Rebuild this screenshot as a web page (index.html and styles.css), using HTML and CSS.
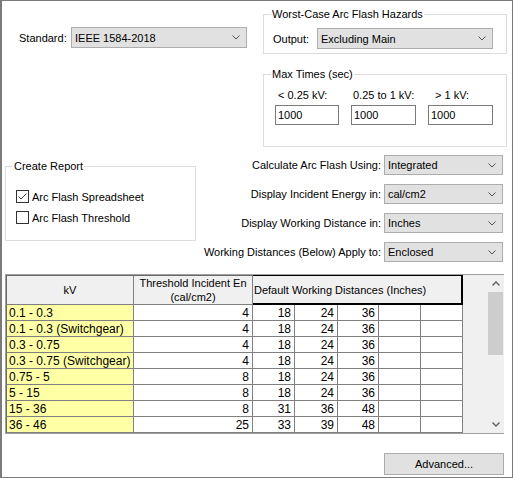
FILE: index.html
```html
<!DOCTYPE html>
<html lang="en">
<head>
    <meta charset="UTF-8">
    <title>Arc Flash Options</title>
    <link rel="stylesheet" href="styles.css">
</head>
<body>
<div class="window">

    <div class="top">
        <div class="standard">
            <label class="lbl std-lbl">Standard:</label>
            <div class="combo combo-wide">
                <span>IEEE 1584-2018</span>
                <svg class="chev" width="8" height="5" viewBox="0 0 8 5"><path d="M0.5 0.5 L4 4 L7.5 0.5" fill="none" stroke="#555"/></svg>
            </div>
        </div>

        <div class="right-col">
            <fieldset class="group g-worst">
                <legend>Worst-Case Arc Flash Hazards</legend>
                <div class="out-row">
                    <label class="lbl out-lbl">Output:</label>
                    <div class="combo combo-wide">
                        <span>Excluding Main</span>
                        <svg class="chev" width="8" height="5" viewBox="0 0 8 5"><path d="M0.5 0.5 L4 4 L7.5 0.5" fill="none" stroke="#555"/></svg>
                    </div>
                </div>
            </fieldset>

            <fieldset class="group g-times">
                <legend>Max Times (sec)</legend>
                <div class="times">
                    <div class="time">
                        <label class="t1">&lt; 0.25 kV:</label>
                        <input type="text" value="1000">
                    </div>
                    <div class="time">
                        <label class="t2">0.25 to 1 kV:</label>
                        <input type="text" value="1000">
                    </div>
                    <div class="time">
                        <label class="t3">&gt; 1 kV:</label>
                        <input type="text" value="1000">
                    </div>
                </div>
            </fieldset>
        </div>
    </div>

    <div class="middle">
        <fieldset class="group g-report">
            <legend>Create Report</legend>
            <div class="check-row first">
                <svg class="cb" width="13" height="13" viewBox="0 0 13 13"><rect x="0.5" y="0.5" width="12" height="12" fill="#fff" stroke="#333"/><path d="M2.5 6.5 L5 9 L10.5 3.5" fill="none" stroke="#444"/></svg>
                <span>Arc Flash Spreadsheet</span>
            </div>
            <div class="check-row">
                <svg class="cb" width="13" height="13" viewBox="0 0 13 13"><rect x="0.5" y="0.5" width="12" height="12" fill="#fff" stroke="#333"/></svg>
                <span>Arc Flash Threshold</span>
            </div>
        </fieldset>

        <div class="options">
            <div class="opt-row">
                <label class="lbl">Calculate Arc Flash Using:</label>
                <div class="combo combo-narrow">
                    <span>Integrated</span>
                    <svg class="chev" width="8" height="5" viewBox="0 0 8 5"><path d="M0.5 0.5 L4 4 L7.5 0.5" fill="none" stroke="#555"/></svg>
                </div>
            </div>
            <div class="opt-row">
                <label class="lbl">Display Incident Energy in:</label>
                <div class="combo combo-narrow">
                    <span>cal/cm2</span>
                    <svg class="chev" width="8" height="5" viewBox="0 0 8 5"><path d="M0.5 0.5 L4 4 L7.5 0.5" fill="none" stroke="#555"/></svg>
                </div>
            </div>
            <div class="opt-row">
                <label class="lbl">Display Working Distance in:</label>
                <div class="combo combo-narrow">
                    <span>Inches</span>
                    <svg class="chev" width="8" height="5" viewBox="0 0 8 5"><path d="M0.5 0.5 L4 4 L7.5 0.5" fill="none" stroke="#555"/></svg>
                </div>
            </div>
            <div class="opt-row">
                <label class="lbl">Working Distances (Below) Apply to:</label>
                <div class="combo combo-narrow">
                    <span>Enclosed</span>
                    <svg class="chev" width="8" height="5" viewBox="0 0 8 5"><path d="M0.5 0.5 L4 4 L7.5 0.5" fill="none" stroke="#555"/></svg>
                </div>
            </div>
        </div>
    </div>

    <div class="grid-wrap">
        <div class="grid-area">
            <table class="grid">
                <colgroup>
                    <col class="c-kv">
                    <col class="c-thr">
                    <col class="c-d1">
                    <col class="c-d2">
                    <col class="c-d3">
                    <col class="c-d4">
                    <col class="c-d5">
                </colgroup>
                <tr class="head">
                    <th class="first">kV</th>
                    <th>Threshold Incident En<br>(cal/cm2)</th>
                    <th colspan="5" class="focus">Default Working Distances (Inches)</th>
                </tr>
                <tr><td class="kv">0.1 - 0.3</td><td>4</td><td>18</td><td>24</td><td>36</td><td></td><td></td></tr>
                <tr><td class="kv">0.1 - 0.3 (Switchgear)</td><td>4</td><td>18</td><td>24</td><td>36</td><td></td><td></td></tr>
                <tr><td class="kv">0.3 - 0.75</td><td>4</td><td>18</td><td>24</td><td>36</td><td></td><td></td></tr>
                <tr><td class="kv">0.3 - 0.75 (Switchgear)</td><td>4</td><td>18</td><td>24</td><td>36</td><td></td><td></td></tr>
                <tr><td class="kv">0.75 - 5</td><td>8</td><td>18</td><td>24</td><td>36</td><td></td><td></td></tr>
                <tr><td class="kv">5 - 15</td><td>8</td><td>18</td><td>24</td><td>36</td><td></td><td></td></tr>
                <tr><td class="kv">15 - 36</td><td>8</td><td>31</td><td>36</td><td>48</td><td></td><td></td></tr>
                <tr><td class="kv">36 - 46</td><td>25</td><td>33</td><td>39</td><td>48</td><td></td><td></td></tr>
            </table>
        </div>
        <div class="vscroll">
            <div class="arrow">
                <svg width="8" height="5" viewBox="0 0 8 5"><path d="M0.5 4.5 L4 1 L7.5 4.5" fill="none" stroke="#606060" stroke-width="1.4"/></svg>
            </div>
            <div class="thumb"></div>
            <div class="track"></div>
            <div class="arrow">
                <svg width="8" height="5" viewBox="0 0 8 5"><path d="M0.5 0.5 L4 4 L7.5 0.5" fill="none" stroke="#606060" stroke-width="1.4"/></svg>
            </div>
        </div>
    </div>

    <div class="footer">
        <button class="btn">Advanced...</button>
    </div>

</div>
</body>
</html>
```

FILE: styles.css
```css
body {
    margin: 0;
    font-family: "Liberation Sans", Arial, sans-serif;
    font-size: 11px;
    color: #000;
    background: #fff;
}
.window {
    width: 513px;
    height: 478px;
    box-sizing: border-box;
    border: 1px solid #7a7a7a;
    border-left-width: 2px;
    background: #fff;
}

/* top part */
.top {
    display: flex;
    align-items: flex-start;
}
.standard {
    flex: 0 0 261px;
    box-sizing: border-box;
    display: flex;
    align-items: center;
    padding: 26px 0 0 17px;
}
.std-lbl {
    width: 52px;
}
.right-col {
    flex: 0 0 244px;
}
.group {
    margin: 0;
    padding: 0;
    min-width: 0;
    box-sizing: border-box;
    border: 1px solid #dcdcdc;
}
.group legend {
    margin-left: 7px;
    padding: 0 1px;
    line-height: 13px;
}
.g-worst {
    margin-top: 7px;
    padding-bottom: 4px;
}
.out-row {
    display: flex;
    align-items: center;
    margin-top: 7px;
    padding-left: 9px;
}
.out-lbl {
    width: 44px;
}
.combo {
    display: flex;
    align-items: center;
    justify-content: space-between;
    box-sizing: border-box;
    height: 21px;
    border: 1px solid #adadad;
    background: #e1e1e1;
    padding: 0 6px 0 3px;
}
.combo-wide {
    width: 176px;
}
.combo-narrow {
    width: 119px;
    height: 20px;
}
.chev {
    flex: none;
}

.g-times {
    margin-top: 14px;
    padding-bottom: 21px;
}
.times {
    display: grid;
    grid-template-columns: 64px 65px 65px;
    column-gap: 12px;
    margin-top: 8px;
    padding-left: 11px;
}
.time label {
    display: block;
    line-height: 13px;
    margin-bottom: 3px;
}
.time .t1 { padding-left: 3px; }
.time .t2 { padding-left: 2px; }
.time .t3 { padding-left: 7px; }
.time input {
    width: 100%;
    height: 20px;
    box-sizing: border-box;
    margin: 0;
    padding: 0 2px;
    border: 1px solid #7a7a7a;
    font: inherit;
    color: #000;
}

/* middle part */
.middle {
    display: flex;
    justify-content: space-between;
    align-items: flex-start;
    padding: 0 9px 0 3px;
}
.g-report {
    width: 191px;
    margin-top: 13px;
    padding-bottom: 16px;
}
.check-row {
    display: flex;
    align-items: center;
    gap: 3px;
    height: 13px;
    margin-top: 8px;
    padding-left: 10px;
}
.check-row.first {
    margin-top: 17px;
}
.cb {
    flex: none;
}
.options {
    display: flex;
    flex-direction: column;
    gap: 9px;
    margin-top: 8px;
}
.opt-row {
    display: flex;
    align-items: center;
    justify-content: flex-end;
    gap: 3px;
}

/* grid */
.grid-wrap {
    display: flex;
    width: 499px;
    height: 160px;
    box-sizing: border-box;
    margin: 12px 0 0 3px;
    border: 1px solid #a0a0a0;
    border-right: 0;
}
.grid-area {
    flex: 1;
    background: #f0f0f0;
    overflow: hidden;
}
.grid {
    table-layout: fixed;
    border-collapse: separate;
    border-spacing: 0;
    width: 457px;
    font-size: 12px;
}
.c-kv { width: 128px; }
.c-thr { width: 119px; }
.c-d1 { width: 42px; }
.c-d2 { width: 43px; }
.c-d3 { width: 41px; }
.c-d4 { width: 42px; }
.c-d5 { width: 42px; }
.grid tr {
    height: 16px;
}
.grid tr.head {
    height: 30px;
}
.grid th {
    padding: 0;
    background: #f0f0f0;
    font-weight: normal;
    font-size: 11px;
    line-height: 14px;
    border-top: 1px solid #6a6a6a;
    border-right: 1px solid #808080;
    border-bottom: 1px solid #808080;
    white-space: nowrap;
    overflow: hidden;
}
.grid th.first {
    border-left: 1px solid #6a6a6a;
}
.grid th.focus {
    text-align: left;
    padding-left: 1px;
    border-top-color: #000;
    border-right: 2px solid #000;
    border-bottom: 2px solid #000;
}
.grid td {
    padding: 0 3px 0 2px;
    background: #fff;
    text-align: right;
    line-height: 14px;
    border-right: 1px solid #808080;
    border-bottom: 1px solid #808080;
    white-space: nowrap;
    overflow: hidden;
}
.grid td.kv {
    background: #ffffa5;
    text-align: left;
    border-left: 1px solid #6a6a6a;
}

.vscroll {
    width: 17px;
    display: flex;
    flex-direction: column;
    background: #f0f0f0;
}
.vscroll .arrow {
    height: 17px;
    display: flex;
    align-items: center;
    justify-content: center;
}
.thumb {
    height: 63px;
    margin: 0 1px;
    background: #cdcdcd;
}
.track {
    flex: 1;
}

/* footer */
.footer {
    display: flex;
    justify-content: flex-end;
    padding: 19px 8px 0 0;
}
.btn {
    width: 120px;
    height: 22px;
    margin: 0;
    padding: 0;
    border: 1px solid #adadad;
    background: #e1e1e1;
    font: inherit;
    color: #000;
}
```
